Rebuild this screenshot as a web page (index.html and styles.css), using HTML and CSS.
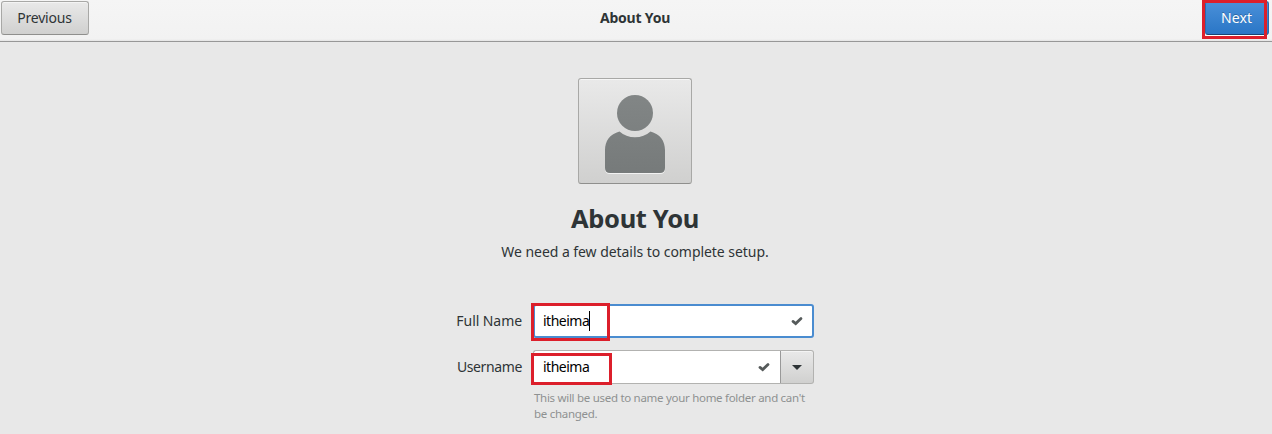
FILE: index.html
```html
<!DOCTYPE html>
<html lang="en">
<head>
<meta charset="utf-8">
<title>About You</title>
<link rel="stylesheet" href="styles.css">
</head>
<body>
<header class="headerbar">
  <button class="btn prev"><span>Previous</span></button>
  <h1 class="title"><span>About You</span></h1>
  <div class="next-wrap">
    <button class="btn next"><span>Next</span></button>
    <i class="mark mark-next"></i>
  </div>
</header>
<main class="page">
  <button class="avatar" aria-label="Avatar">
    <svg width="62" height="82" viewBox="0 0 62 82">
      <defs><linearGradient id="g" x1="0" y1="0" x2="0" y2="82" gradientUnits="userSpaceOnUse"><stop offset="0" stop-color="#828686"/><stop offset="1" stop-color="#767a7a"/></linearGradient></defs>
      <path d="M15.500 38.500C6 41 1 48 1 57V75Q1 80 6 80H56Q61 80 61 75V57C61 48 56 41 46.500 38.500Q40 44.300 31 44.300Q22 44.300 15.500 38.500Z" fill="#f2f2f2" transform="translate(0 1)"/>
      <circle cx="31" cy="20" r="18" fill="url(#g)"/>
      <path d="M15.500 38.500C6 41 1 48 1 57V75Q1 80 6 80H56Q61 80 61 75V57C61 48 56 41 46.500 38.500Q40 44.300 31 44.300Q22 44.300 15.500 38.500Z" fill="url(#g)"/>
    </svg>
  </button>
  <h2 class="heading"><span>About You</span></h2>
  <p class="subtitle"><span>We need a few details to complete setup.</span></p>
  <form class="form">
    <label class="label"><span class="label-name">Full Name</span></label>
    <div class="field">
      <div class="entry focused">
        <span class="value">itheima</span><i class="caret"></i>
        <svg class="check" width="12" height="10" viewBox="0 0 12 10"><path d="M2 5.400 4.700 7.600 10 2.600" fill="none" stroke="#555a5a" stroke-width="2.800" stroke-linecap="round"/></svg>
      </div>
      <i class="mark mark-name"></i>
    </div>
    <label class="label"><span class="label-user">Username</span></label>
    <div class="field combo">
      <div class="entry linked">
        <span class="value">itheima</span>
        <svg class="check" width="12" height="10" viewBox="0 0 12 10"><path d="M2 5.400 4.700 7.600 10 2.600" fill="none" stroke="#555a5a" stroke-width="2.800" stroke-linecap="round"/></svg>
      </div>
      <button type="button" class="btn drop" aria-label="Choose"><svg width="10" height="5" viewBox="0 0 10 5"><path d="M0 0H10L5 5Z" fill="#2e3436"/></svg></button>
      <i class="mark mark-user"></i>
    </div>
    <p class="hint"><span>This will be used to name your home folder and can't</span><br><span>be changed.</span></p>
  </form>
</main>
</body>
</html>
```
FILE: styles.css
```css
* { box-sizing: border-box; margin: 0; padding: 0; }
body {
  width: 1272px; height: 434px; overflow: hidden;
  background: #e8e8e8; color: #2e3436;
  font: 14px/20px "Noto Sans", "Open Sans", sans-serif;
}
span { white-space: nowrap; }
.headerbar {
  display: grid; grid-template-columns: 1fr auto 1fr; align-items: start;
  height: 42px; padding: 1px 3px 0 1px;
  background: linear-gradient(#f5f5f5, #f2f2f2 39px, #e4e4e4);
  border-bottom: 1px solid #979797;
}
.btn {
  display: flex; align-items: center; justify-content: center;
  height: 34px; font: inherit; color: #2e3436;
  background: linear-gradient(#e9e9e9, #d0d0cf);
  border: 1px solid #a8a8a6; border-bottom-color: #8f8f8d; border-radius: 3px;
  box-shadow: inset 0 1px #f4f4f4;
}
.prev { width: 88px; padding-right: 1px; letter-spacing: -.2px; }
.title { font-size: 14px; line-height: 34px; font-weight: 700; letter-spacing: -.2px; }
.next-wrap { position: relative; justify-self: end; }
.next {
  width: 64px; padding-right: 1px; color: #fff; letter-spacing: .1px;
  background: linear-gradient(#4a90d9, #2a76c6);
  border-color: #2a69ad; border-bottom-color: #184472; box-shadow: 0 1px #fff;
  text-shadow: 0 -1px rgba(0,0,0,.25);
}
.mark { position: absolute; border: 3px solid #dc1f2b; }
.mark-next { left: -3px; top: -1px; width: 65px; height: 39px; }
.page { display: flex; flex-direction: column; align-items: center; width: 1270px; padding-top: 36px; }
.avatar {
  display: flex; justify-content: center; width: 114px; height: 106px; padding-top: 14px;
  background: linear-gradient(#e9e9e9, #d0d0cf);
  border: 1px solid #a8a8a6; border-bottom-color: #8f8f8d; border-radius: 3px;
  box-shadow: inset 0 1px #f6f6f6;
}
.heading { margin-top: 16px; font-size: 25.5px; line-height: 36px; font-weight: 700; letter-spacing: -.35px; }
.subtitle { margin-top: 6px; letter-spacing: -.05px; }
.form {
  display: grid; grid-template-columns: 120px 281px; column-gap: 11px; row-gap: 12px;
  width: 412px; margin: 42px 0 0 402px; align-self: flex-start;
}
.label { text-align: right; line-height: 34px; }
.label-name { letter-spacing: -.07px; }
.label-user { letter-spacing: -.38px; }
.field { position: relative; height: 34px; }
.entry {
  display: flex; align-items: center; height: 34px; padding: 0 10px 0 9px;
  background: #fff; color: #000; border: 1px solid #b2b2b0; border-radius: 3px;
}
.value { letter-spacing: -.5px; }
.focused { padding: 0 9px 0 8px; border: 2px solid #4a8cd0; }
.combo { display: flex; }
.linked { flex: 1; border-right: 0; border-radius: 3px 0 0 3px; }
.drop { width: 34px; border-radius: 0 3px 3px 0; border-color: #b2b2b0; border-left-color: #999; }
.caret { width: 1px; height: 20px; background: #000; }
.check { margin-left: auto; }
.mark-name { left: -2px; top: -1px; width: 79px; height: 38px; }
.mark-user { left: -2px; top: 3px; width: 81px; height: 32px; }
.hint { grid-column: 2; margin: -6px 0 0 1px; font-size: 11.5px; line-height: 16px; letter-spacing: -.29px; color: #8e9191; }
```
